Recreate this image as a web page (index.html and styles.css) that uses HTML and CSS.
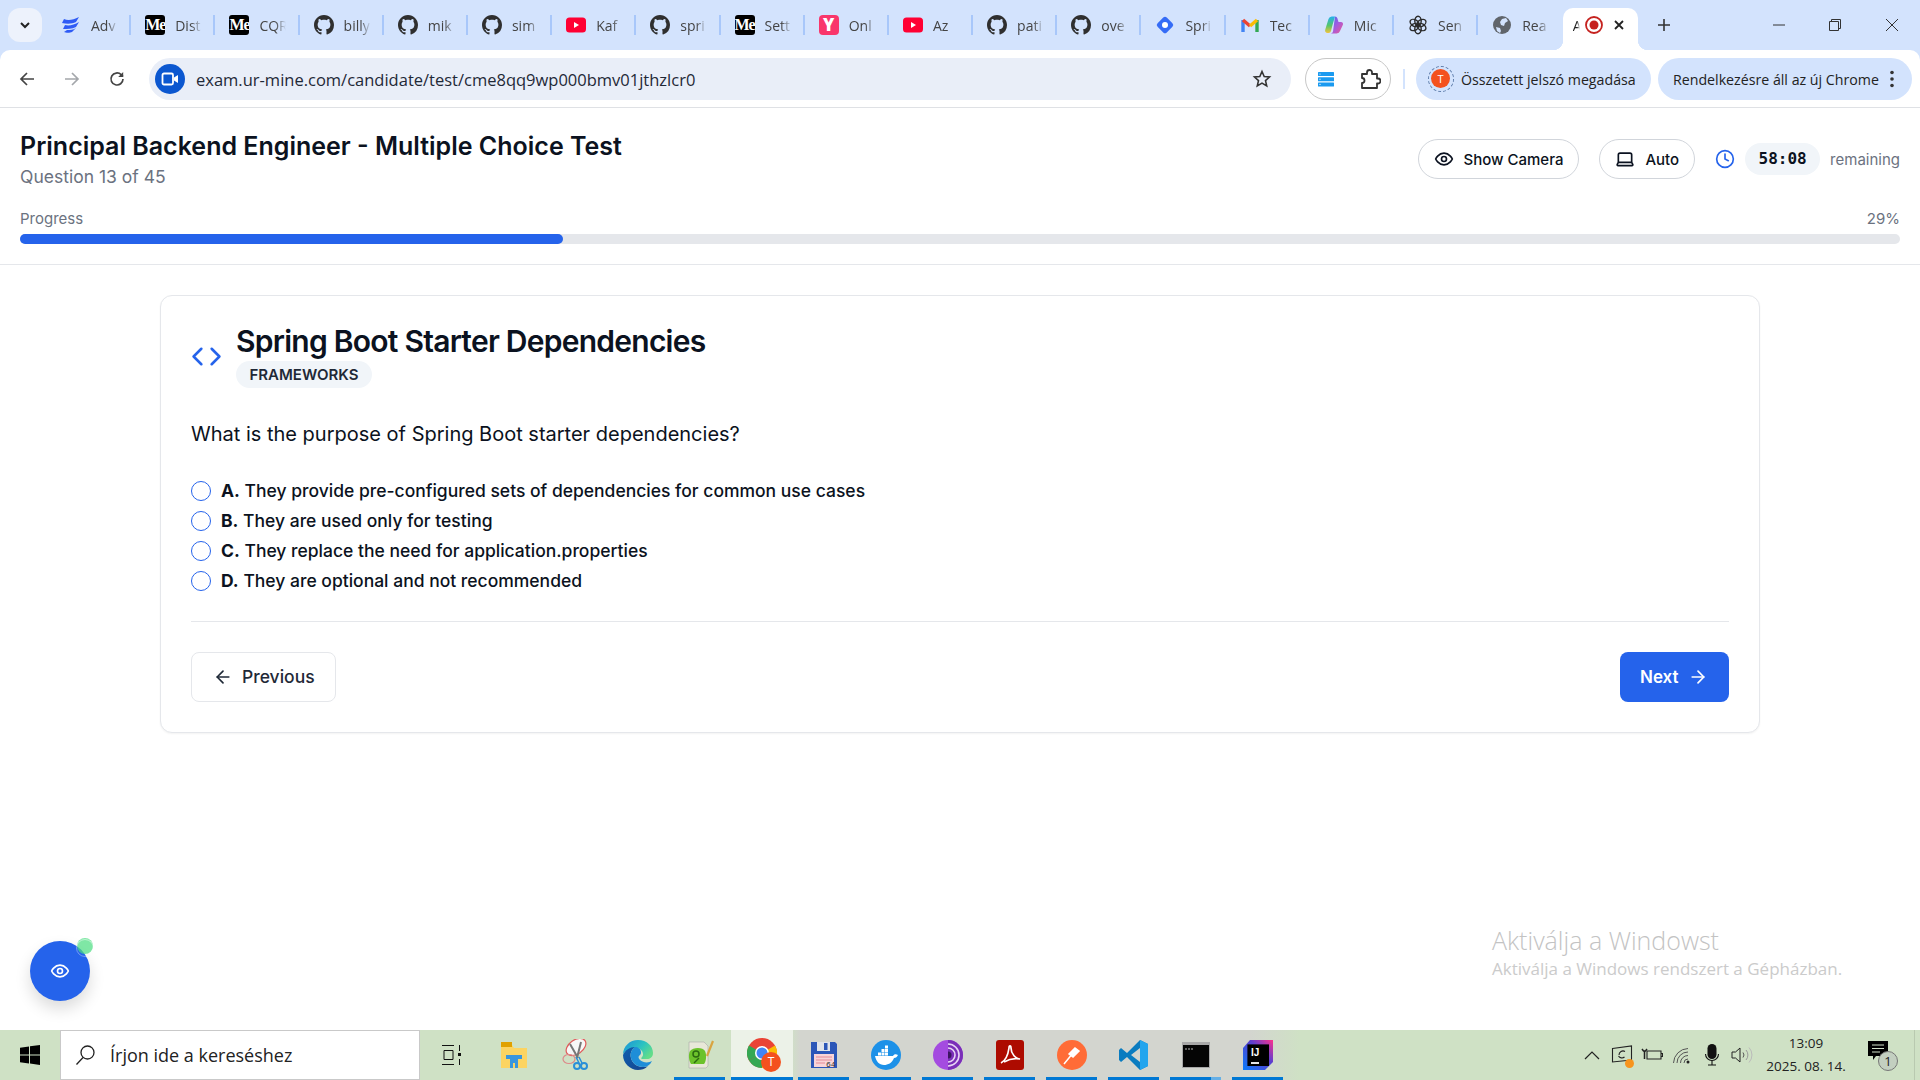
FILE: index.html
```html
<!DOCTYPE html>
<html lang="en">
<head>
  <meta charset="UTF-8" />
  <title>Principal Backend Engineer - Multiple Choice Test</title>
  <link rel="stylesheet" href="styles.css">
</head>
<body>
  <svg class="sprites" width="0" height="0">
    <symbol id="gh" viewBox="0 0 16 16"><path fill="#2f2f2f" d="M8 0C3.58 0 0 3.58 0 8c0 3.54 2.29 6.53 5.47 7.59.4.07.55-.17.55-.38 0-.19-.01-.82-.01-1.49-2.01.37-2.53-.49-2.69-.94-.09-.23-.48-.94-.82-1.13-.28-.15-.68-.52-.01-.53.63-.01 1.08.58 1.23.82.72 1.21 1.87.87 2.33.66.07-.52.28-.87.51-1.07-1.78-.2-3.64-.89-3.64-3.95 0-.87.31-1.59.82-2.15-.08-.2-.36-1.02.08-2.12 0 0 .67-.21 2.2.82.64-.18 1.32-.27 2-.27.68 0 1.36.09 2 .27 1.53-1.04 2.2-.82 2.2-.82.44 1.1.16 1.92.08 2.12.51.56.82 1.27.82 2.15 0 3.07-1.87 3.75-3.65 3.95.29.25.54.73.54 1.48 0 1.07-.01 1.93-.01 2.2 0 .21.15.46.55.38A8.013 8.013 0 0016 8c0-4.42-3.58-8-8-8z"/></symbol>
    <symbol id="yt" viewBox="0 0 20 20"><rect y="2.500" width="20" height="15" rx="3.500" fill="#ff0033"/><path fill="#fff" d="M8 7l5 3-5 3z"/></symbol>
  </svg>

  <!-- Browser tabs -->
  <div class="tabstrip">
    <button class="tab-search"><svg width="14" height="14" viewBox="0 0 14 14"><path d="M3 5l4 4 4-4" fill="none" stroke="#222" stroke-width="2"/></svg></button>
    <div class="tab"><svg class="tab-icon" viewBox="0 0 20 20"><path fill="#2f5bf5" d="M3 4c4 2 9 1 15-2l-3 5c-4 2-9 2-14 1zM4 10c4 1 9 0 14-3l-3 5c-4 2-9 2-13 2zM6 15c3 0 6 0 9-2l-4 4c-2 1-6 1-8 0z"/></svg><span class="tab-text">Adv</span></div>
    <div class="tab"><span class="medium">Me</span><span class="tab-text">Dist</span></div>
    <div class="tab"><span class="medium">Me</span><span class="tab-text">CQR</span></div>
    <div class="tab"><svg class="tab-icon"><use href="#gh"/></svg><span class="tab-text">billy</span></div>
    <div class="tab"><svg class="tab-icon"><use href="#gh"/></svg><span class="tab-text">mik</span></div>
    <div class="tab"><svg class="tab-icon"><use href="#gh"/></svg><span class="tab-text">sim</span></div>
    <div class="tab"><svg class="tab-icon"><use href="#yt"/></svg><span class="tab-text">Kaf</span></div>
    <div class="tab"><svg class="tab-icon"><use href="#gh"/></svg><span class="tab-text">spri</span></div>
    <div class="tab"><span class="medium">Me</span><span class="tab-text">Sett</span></div>
    <div class="tab"><span class="y-logo">Y</span><span class="tab-text">Onl</span></div>
    <div class="tab"><svg class="tab-icon"><use href="#yt"/></svg><span class="tab-text">Az</span></div>
    <div class="tab"><svg class="tab-icon"><use href="#gh"/></svg><span class="tab-text">pati</span></div>
    <div class="tab"><svg class="tab-icon"><use href="#gh"/></svg><span class="tab-text">ove</span></div>
    <div class="tab"><svg class="tab-icon" viewBox="0 0 20 20"><rect x="3.500" y="3.500" width="13" height="13" rx="2.500" transform="rotate(45 10 10)" fill="#356cf6"/><circle cx="10" cy="10" r="3" fill="#fff"/></svg><span class="tab-text">Spri</span></div>
    <div class="tab"><svg class="tab-icon" viewBox="0 0 20 20"><path d="M3 17V5" stroke="#4285f4" stroke-width="3.400" fill="none"/><path d="M17 17V5" stroke="#34a853" stroke-width="3.400" fill="none"/><path d="M3 5l7 6" stroke="#ea4335" stroke-width="3.400" fill="none"/><path d="M10 11l7-6" stroke="#fbbc04" stroke-width="3.400" fill="none"/></svg><span class="tab-text">Tec</span></div>
    <div class="tab"><svg class="tab-icon" viewBox="0 0 20 20"><defs><linearGradient id="cop1" x1="0" y1="0" x2="0" y2="1"><stop offset="0" stop-color="#23b0ef"/><stop offset=".55" stop-color="#56c66a"/><stop offset="1" stop-color="#f3c33c"/></linearGradient><linearGradient id="cop2" x1="0" y1="0" x2="1" y2="1"><stop offset="0" stop-color="#3f6fe8"/><stop offset=".5" stop-color="#a35be0"/><stop offset="1" stop-color="#ef5a8c"/></linearGradient></defs><path fill="url(#cop1)" d="M8 1.500h3L8.500 10 7 16a2.500 2.500 0 0 1-2.400 2H3.500a2.500 2.500 0 0 1-2.300-3.300L4.500 4a3.500 3.500 0 0 1 3.500-2.500z"/><path fill="url(#cop2)" d="M11 1.500a2.500 2.500 0 0 1 2.400 1.800L14.500 7H17a2 2 0 0 1 1.900 2.700L16 16a3.500 3.500 0 0 1-3.300 2.500H6.500A2.500 2.500 0 0 0 9 16.500z"/></svg><span class="tab-text">Mic</span></div>
    <div class="tab"><svg class="tab-icon" viewBox="0 0 20 20" fill="none" stroke="#2b2b2b" stroke-width="1.400"><ellipse cx="10" cy="6" rx="3.200" ry="4.800"/><ellipse cx="10" cy="6" rx="3.200" ry="4.800" transform="rotate(60 10 10)"/><ellipse cx="10" cy="6" rx="3.200" ry="4.800" transform="rotate(120 10 10)"/><ellipse cx="10" cy="6" rx="3.200" ry="4.800" transform="rotate(180 10 10)"/><ellipse cx="10" cy="6" rx="3.200" ry="4.800" transform="rotate(240 10 10)"/><ellipse cx="10" cy="6" rx="3.200" ry="4.800" transform="rotate(300 10 10)"/></svg><span class="tab-text">Sen</span></div>
    <div class="tab"><svg class="tab-icon" viewBox="0 0 20 20"><circle cx="10" cy="10" r="9" fill="#60656b"/><path fill="#d3e3fd" d="M10 4l4-1 2 3-3 2-1 3-3-1-1-3zM4 12l4 1 1 3-1 2-3-2z"/></svg><span class="tab-text">Rea</span></div>

    <div class="tab-active">
      <span class="tab-active-text">A</span>
      <svg width="20" height="20" viewBox="0 0 20 20"><circle cx="10" cy="10" r="8" fill="none" stroke="#c5221f" stroke-width="1.800"/><circle cx="10" cy="10" r="4.500" fill="#c5221f"/></svg>
      <svg class="tab-close" width="12" height="12" viewBox="0 0 12 12"><path d="M2 2l8 8M10 2l-8 8" stroke="#222" stroke-width="1.800"/></svg>
    </div>
    <svg class="new-tab" width="16" height="16" viewBox="0 0 16 16"><path d="M8 2v12M2 8h12" stroke="#333" stroke-width="1.600"/></svg>

    <div class="window-btns">
      <span class="window-btn"><svg width="14" height="14" viewBox="0 0 14 14"><path d="M1 7h12" stroke="#333"/></svg></span>
      <span class="window-btn"><svg width="14" height="14" viewBox="0 0 14 14" fill="none" stroke="#333"><path d="M1.500 3.500h9v9h-9zM3.500 3.500v-2h9v9h-2"/></svg></span>
      <span class="window-btn"><svg width="14" height="14" viewBox="0 0 14 14"><path d="M1 1l12 12M13 1L1 13" stroke="#333"/></svg></span>
    </div>
  </div>

  <!-- Browser toolbar -->
  <div class="toolbar-wrap">
    <div class="toolbar">
      <span class="nav-btn"><svg width="18" height="18" viewBox="0 0 18 18" fill="none" stroke="#444" stroke-width="1.700"><path d="M16 9H3M9 3L3 9l6 6"/></svg></span>
      <span class="nav-btn"><svg width="18" height="18" viewBox="0 0 18 18" fill="none" stroke="#a4a7ab" stroke-width="1.700"><path d="M2 9h13M9 3l6 6-6 6"/></svg></span>
      <span class="nav-btn"><svg width="18" height="18" viewBox="0 0 18 18" fill="none" stroke="#444" stroke-width="1.700"><path d="M15 9a6 6 0 1 1-1.800-4.300L15 6.500"/><path d="M15.200 2v5h-5" stroke="none" fill="#444"/></svg></span>

      <div class="omnibox">
        <span class="cam-chip"><svg width="18" height="18" viewBox="0 0 18 18"><rect x="1.500" y="3.500" width="10.500" height="11" rx="1.500" fill="none" stroke="#fff" stroke-width="1.800"/><path d="M13 7.500l4-2.500v8l-4-2.500z" fill="#fff"/></svg></span>
        <span class="url">exam.ur-mine.com/candidate/test/cme8qq9wp000bmv01jthzlcr0</span>
        <svg class="star" width="20" height="20" viewBox="0 0 20 20"><path d="M10 2.500l2.200 5 5.300.5-4 3.600 1.200 5.300L10 14.100l-4.700 2.800 1.200-5.300-4-3.600 5.300-.5z" fill="none" stroke="#333" stroke-width="1.600"/></svg>
      </div>

      <div class="ext-pill">
        <svg width="20" height="20" viewBox="0 0 20 20"><rect x="2" y="3" width="16" height="4" rx=".5" fill="#1a9af0"/><rect x="2" y="8.200" width="16" height="4" rx=".5" fill="#1a9af0"/><rect x="2" y="13.400" width="16" height="4" rx=".5" fill="#1a9af0"/><circle cx="4" cy="5" r=".6" fill="#fff"/><circle cx="4" cy="10.200" r=".6" fill="#fff"/><circle cx="4" cy="15.400" r=".6" fill="#fff"/></svg>
        <svg width="22" height="22" viewBox="0 0 22 22"><path d="M3 6h5V4.500a2.500 2.500 0 0 1 5 0V6h5v4.500h1a2.500 2.500 0 0 1 0 5h-1V20H3v-5a2.500 2.500 0 0 0 0-5z" fill="none" stroke="#333" stroke-width="1.800" stroke-linejoin="round"/></svg>
      </div>
      <span class="toolbar-sep"></span>
      <div class="chip chip-pass">
        <span class="avatar-ring"><span class="avatar">T</span></span>
        Összetett jelszó megadása
      </div>
      <div class="chip chip-update">
        Rendelkezésre áll az új Chrome
        <svg width="6" height="20" viewBox="0 0 6 20"><circle cx="3" cy="3.500" r="1.800" fill="#333"/><circle cx="3" cy="10" r="1.800" fill="#333"/><circle cx="3" cy="16.500" r="1.800" fill="#333"/></svg>
      </div>
    </div>
  </div>

  <!-- Page -->
  <main class="page">
    <header class="test-header">
      <div class="header-row">
        <div>
          <h1>Principal Backend Engineer - Multiple Choice Test</h1>
          <p class="question-count">Question 13 of 45</p>
        </div>
        <div class="header-actions">
          <button class="pill-btn">
            <svg class="ico20" viewBox="0 0 24 24"><path d="M2 12s3-7 10-7 10 7 10 7-3 7-10 7-10-7-10-7Z"/><circle cx="12" cy="12" r="3"/></svg>
            Show Camera
          </button>
          <button class="pill-btn">
            <svg class="ico20" viewBox="0 0 24 24"><path d="M20 16V7a2 2 0 0 0-2-2H6a2 2 0 0 0-2 2v9m16 0H4m16 0 1.280 2.550a1 1 0 0 1-.9 1.450H3.620a1 1 0 0 1-.9-1.450L4 16"/></svg>
            Auto
          </button>
          <svg class="ico-clock" viewBox="0 0 24 24"><circle cx="12" cy="12" r="10"/><path d="M12 6v6l4 2"/></svg>
          <span class="timer">58:08</span>
          <span class="remaining">remaining</span>
        </div>
      </div>
      <div class="progress-labels"><span>Progress</span><span>29%</span></div>
      <div class="progress-track"><div class="progress-fill" style="width: 28.89%"></div></div>
    </header>

    <section class="card">
      <div class="card-head">
        <svg class="ico-code" viewBox="0 0 24 24"><path d="m16 18 6-6-6-6"/><path d="m8 6-6 6 6 6"/></svg>
        <div>
          <h2>Spring Boot Starter Dependencies</h2>
          <span class="badge">FRAMEWORKS</span>
        </div>
      </div>
      <p class="question">What is the purpose of Spring Boot starter dependencies?</p>
      <div class="options">
        <label class="option"><span class="radio"></span><span><b>A.</b> They provide pre-configured sets of dependencies for common use cases</span></label>
        <label class="option"><span class="radio"></span><span><b>B.</b> They are used only for testing</span></label>
        <label class="option"><span class="radio"></span><span><b>C.</b> They replace the need for application.properties</span></label>
        <label class="option"><span class="radio"></span><span><b>D.</b> They are optional and not recommended</span></label>
      </div>
      <div class="card-nav">
        <button class="nav-prev">
          <svg class="ico20" viewBox="0 0 24 24"><path d="m12 19-7-7 7-7"/><path d="M19 12H5"/></svg>
          Previous
        </button>
        <button class="nav-next">
          Next
          <svg class="ico20" viewBox="0 0 24 24"><path d="M5 12h14"/><path d="m12 5 7 7-7 7"/></svg>
        </button>
      </div>
    </section>

    <button class="fab">
      <svg class="ico-fab" viewBox="0 0 24 24"><path d="M2 12s3-7 10-7 10 7 10 7-3 7-10 7-10-7-10-7Z"/><circle cx="12" cy="12" r="3"/></svg>
      <span class="fab-dot"></span>
    </button>

    <div class="watermark">
      <div class="watermark-title">Aktiválja a Windowst</div>
      <div class="watermark-sub">Aktiválja a Windows rendszert a Gépházban.</div>
    </div>
  </main>

  <!-- Windows taskbar -->
  <footer class="taskbar">
    <span class="start"><svg width="22" height="22" viewBox="0 0 22 22"><path fill="#000" d="M1 3.800l9-1.300v8H1zM11 2.300L21 1v9.500H11zM1 11.500h9v8l-9-1.300zM11 11.500h10V21l-10-1.400z"/></svg></span>
    <div class="search-box">
      <svg width="22" height="22" viewBox="0 0 22 22" fill="none" stroke="#222" stroke-width="1.300"><circle cx="13.500" cy="8.500" r="6.500"/><path d="M9 13.500L2.500 20.500"/></svg>
      <span>Írjon ide a kereséshez</span>
    </div>
    <span class="task-view"><svg width="22" height="22" viewBox="0 0 22 22" fill="none" stroke="#111"><path d="M1 1.500h12M1 20.500h12M3 6.500h9v9H3zM18.500 1v6M18.500 15v6"/><rect x="17" y="9" width="3" height="3" fill="#111" stroke="none"/></svg></span>

    <span class="app"><svg width="28" height="28" viewBox="0 0 28 28"><path d="M1 4h11l2 3h13v20H1z" fill="#fcd462"/><path d="M1 1h11v5H1z" fill="#e0a100"/><path d="M10 17h8v10h-3v-5h-2v5h-3z" fill="#3a96dd"/><rect x="6" y="14" width="16" height="4" fill="#3a96dd"/></svg></span>
    <span class="app"><svg width="28" height="32" viewBox="0 0 28 32"><ellipse cx="14" cy="8" rx="11" ry="7" fill="#f7f7f7" stroke="#e05a5a" stroke-width="1.200" transform="rotate(-35 14 8)"/><path d="M8 5l8 14M19 3l-4 16" stroke="#777" stroke-width="2"/><ellipse cx="7" cy="20" rx="6" ry="4.500" fill="none" stroke="#dd8a8a" stroke-width="1.200"/><path d="M14 18l3 6M17 18l3 6" stroke="#2a8fd8" stroke-width="1.500"/><circle cx="15" cy="27" r="3" fill="none" stroke="#2a8fd8" stroke-width="2"/><circle cx="22" cy="27" r="3" fill="none" stroke="#2a8fd8" stroke-width="2"/></svg></span>
    <span class="app"><svg width="32" height="32" viewBox="0 0 32 32"><defs><linearGradient id="edge1" x1="0" y1="0" x2="1" y2=".6"><stop offset="0" stop-color="#1a8fdc"/><stop offset=".6" stop-color="#2cc3c0"/><stop offset="1" stop-color="#62dc8a"/></linearGradient><linearGradient id="edge2" x1="0" y1="0" x2="1" y2="1"><stop offset="0" stop-color="#0d5fb0"/><stop offset="1" stop-color="#17448c"/></linearGradient></defs><path d="M1 16C1 7 8 1 16 1c9 0 15 6 15 13 0 4-3 6-6 6h-5c-1 0-1-1 0-2 1-1 1-2 1-3 0-3-3-6-7-6-6 0-13 4-13 7z" fill="url(#edge1)"/><path d="M1 16c2-5 7-8 12-8-4 3-5 7-4 11 1 5 6 9 12 9 2 0 3 0 5-1-3 3-7 4-10 4C8 31 1 24 1 16z" fill="url(#edge2)"/><path d="M13 8c-4 3-5 7-4 11 1 5 6 9 12 9 4 0 7-2 9-6-3 2-9 2-12-1-2-2-2-4 0-5 1-1 1-2 1-3 0-3-3-5-6-5z" fill="#1f8ed8"/></svg></span>
    <span class="app app-on"><svg width="28" height="32" viewBox="0 0 28 32"><path d="M3 3h15l4 4v20l-2 2H3z" fill="#e8e8d8" stroke="#aaa" stroke-width=".6"/><path d="M4 12c3-4 13-4 15 0s1 11-1 13H5c-2-3-3-9-1-13z" fill="#6cc22b"/><circle cx="10" cy="15" r="3" fill="none" stroke="#2c6a10" stroke-width="1.500"/><path d="M13 19l-5 5" stroke="#2c6a10" stroke-width="1.500"/><path d="M21 17l6-15" stroke="#d9a441" stroke-width="2.200"/></svg></span>
    <span class="app app-active"><span class="chrome-badge"><svg width="30" height="30" viewBox="0 0 30 30"><circle cx="15" cy="15" r="15" fill="#ea4335"/><path d="M15 15L2 22.500A15 15 0 0 1 2 7.500z" fill="#34a853"/><path d="M15 15l-13 7.500A15 15 0 0 0 15 30z" fill="#34a853"/><path d="M15 15l13-7.500A15 15 0 0 1 15 30z" fill="#fbbc04"/><circle cx="15" cy="15" r="7" fill="#fff"/><circle cx="15" cy="15" r="5.500" fill="#4285f4"/></svg><span class="chrome-t">T</span></span></span>
    <span class="app app-on"><svg width="28" height="28" viewBox="0 0 28 28"><path d="M1 1h24l2 2v24H1z" fill="#2b56b8"/><rect x="7" y="1" width="13" height="9" fill="#dfe3ea"/><rect x="14" y="2" width="3.500" height="7" fill="#2b56b8"/><rect x="4" y="13" width="20" height="13" fill="#f8d4d8"/><path d="M6 16h16M6 19h16M6 22h9" stroke="#e58a96"/><text x="16" y="25.500" class="floppy-text">64</text></svg></span>
    <span class="app app-on"><svg width="30" height="30" viewBox="0 0 30 30"><circle cx="15" cy="15" r="15" fill="#1d91e8"/><path d="M4 16h18c1-2 3-2 5-1-1 2-2 3-4 3-2 5-6 7-10 7-5 0-8-4-9-9z" fill="#fff"/><path fill="#fff" d="M7 12.500h3v3H7zM10.500 12.500h3v3h-3zM14 12.500h3v3h-3zM10.500 9h3v3h-3zM14 9h3v3h-3zM14 5.500h3v3h-3z"/></svg></span>
    <span class="app app-on"><svg width="30" height="30" viewBox="0 0 30 30"><circle cx="15" cy="15" r="15" fill="#a44be0"/><path d="M15 0a15 15 0 0 1 0 30z" fill="#7a2fb8"/><path d="M15 4a11 11 0 0 1 0 22M15 8a7 7 0 0 1 0 14" fill="none" stroke="#e8d4f5" stroke-width="1.600"/><path d="M15 11.500a3.500 3.500 0 0 1 0 7z" fill="#3b1560"/></svg></span>
    <span class="app app-on"><svg width="28" height="30" viewBox="0 0 28 30"><rect width="28" height="30" rx="3" fill="#ad0b00"/><path d="M5 23c4-2 7-8 8-15 0-3 2-3 2 0 0 6 5 11 9 11-5-1-11 0-16 3" fill="none" stroke="#fff" stroke-width="1.700"/></svg></span>
    <span class="app app-on"><svg width="30" height="30" viewBox="0 0 30 30"><circle cx="15" cy="15" r="15" fill="#ff6c37"/><path d="M7 24l9-11M12 14l6-6 4 3-6 6z" fill="#fff" stroke="#fff" stroke-width="1.500"/></svg></span>
    <span class="app app-on"><svg width="32" height="32" viewBox="0 0 32 32"><path d="M22 1l8 4v22l-8 4L9 18l-6 5-2-2v-10l2-2 6 5z" fill="#0a7cc0"/><path d="M22 1l8 4v22l-8 4z" fill="#24a5ee"/><path d="M22 9l-9 7 9 7z" fill="#d3d5cf"/></svg></span>
    <span class="app app-on app-split"><svg width="28" height="26" viewBox="0 0 28 26"><rect width="28" height="26" fill="#a8a8a8"/><rect x="1" y="3" width="26" height="22" fill="#050505"/><path d="M3 7h8" stroke="#bbb" stroke-dasharray="2 1"/></svg></span>
    <span class="app app-on"><svg width="30" height="30" viewBox="0 0 30 30"><defs><linearGradient id="ij1" x1="0" y1="1" x2="1" y2="0"><stop offset="0" stop-color="#087cfa"/><stop offset=".6" stop-color="#5a3fd0"/><stop offset="1" stop-color="#ff318c"/></linearGradient></defs><path d="M7 0h23v22l-8 8H0V8z" fill="url(#ij1)"/><rect x="6" y="6" width="24" height="24" fill="#000" transform="translate(-1 -1) scale(.9)"/><text x="8" y="16" class="ij-text">IJ</text><path d="M8 23h8" stroke="#fff" stroke-width="1.800"/></svg></span>

    <div class="tray">
      <span class="tray-item"><svg width="18" height="18" viewBox="0 0 18 18"><path d="M2 13l7-7 7 7" fill="none" stroke="#222" stroke-width="1.200"/></svg></span>
      <span class="tray-item tray-update"><svg width="22" height="20" viewBox="0 0 22 20" fill="none" stroke="#222" stroke-width="1.100"><path d="M1.500 3.500L20.500 1v14L1.500 17z"/><path d="M14 6.500a4 4 0 0 0-6 3.500M7.500 11a4 4 0 0 0 6 1"/></svg><i class="update-dot"></i></span>
      <span class="tray-item"><svg width="22" height="14" viewBox="0 0 22 14" fill="none" stroke="#222" stroke-width="1.100"><path d="M6 3h14v8H6zM20 5.500h1.500v3H20z"/><path d="M1 1l1.500 2h2L6 1M3.500 3v8" stroke-width="1.500"/></svg></span>
      <span class="tray-item"><svg width="20" height="18" viewBox="0 0 20 18" fill="none" stroke="#555" stroke-width="1"><path d="M1.500 17A15 15 0 0 1 16 2.500M5 17A11 11 0 0 1 16 6M8.500 17a7.500 7.500 0 0 1 7.500-7.500M12 17a4 4 0 0 1 4-4"/><circle cx="16" cy="16" r="1.500" fill="#222" stroke="none"/></svg></span>
      <span class="tray-item"><svg width="16" height="22" viewBox="0 0 16 22"><rect x="3.500" y="0" width="9" height="15" rx="4.500" fill="#111"/><path d="M1.500 10a6.500 6.500 0 0 0 13 0M8 16.500V21M4 21h8" fill="none" stroke="#111" stroke-width="1.100"/></svg></span>
      <span class="tray-item"><svg width="22" height="18" viewBox="0 0 22 18" fill="none" stroke="#222" stroke-width="1"><path d="M1 6h3.500L9 2v14l-4.500-4H1z"/><path d="M12 6.500a4 4 0 0 1 0 5" stroke="#555"/><path d="M15 4a7.500 7.500 0 0 1 0 10" stroke="#999"/><path d="M18 1.500a11 11 0 0 1 0 15" stroke="#bbb"/></svg></span>
      <div class="clock"><div>13:09</div><div>2025. 08. 14.</div></div>
      <span class="notif"><svg width="22" height="20" viewBox="0 0 22 20"><path fill="#000" d="M0 0h20v15H8l-3 4v-4H0z"/><path d="M4 4h12M4 7.500h12M4 11h8" stroke="#d3e3cb"/></svg><span class="notif-count">1</span></span>
      <span class="show-desktop"></span>
    </div>
  </footer>
</body>
</html>
```

FILE: styles.css
```css
* {
  box-sizing: border-box;
}
html, body {
  margin: 0;
  padding: 0;
}
body {
  width: 1920px;
  height: 1080px;
  overflow: hidden;
  display: flex;
  flex-direction: column;
  font-family: 'Inter', sans-serif;
  color: #0b1220;
  background-color: #fff;
}
button {
  font-family: inherit;
  cursor: pointer;
}
h1, h2, p {
  margin: 0;
}
.sprites {
  position: absolute;
}

/* browser tabs */
.tabstrip {
  height: 50px;
  flex: none;
  display: flex;
  align-items: center;
  background-color: #d3e3fd;
  font-family: 'Open Sans', sans-serif;
  font-size: 14px;
  color: #444;
}
.tab-search {
  width: 34px;
  height: 34px;
  margin: 0 5px 0 8px;
  padding: 0;
  border: none;
  border-radius: 12px;
  background-color: #edf2fc;
  display: flex;
  align-items: center;
  justify-content: center;
}
.tab {
  width: 84.200px;
  height: 20px;
  flex: none;
  padding-left: 14px;
  display: flex;
  align-items: center;
  gap: 10px;
  border-right: 2px solid #a8c7fa;
}
.tab:nth-of-type(18) {
  border-right-color: transparent;
}
.tab-icon {
  width: 20px;
  height: 20px;
  flex: none;
}
.tab-text {
  width: 27px;
  overflow: hidden;
  white-space: nowrap;
  -webkit-mask-image: linear-gradient(to right, #000 60%, transparent);
  mask-image: linear-gradient(to right, #000 60%, transparent);
}
.medium {
  width: 20px;
  height: 20px;
  flex: none;
  overflow: hidden;
  border-radius: 3px;
  background-color: #000;
  color: #fff;
  font: bold 16px/20px 'Liberation Serif', serif;
  letter-spacing: -1px;
}
.y-logo {
  width: 20px;
  height: 20px;
  flex: none;
  border-radius: 4px;
  background-color: #f9366b;
  color: #fff;
  font: 800 17px/20px 'Open Sans', sans-serif;
  text-align: center;
}
.tab-active {
  position: relative;
  width: 75px;
  height: 42px;
  flex: none;
  align-self: flex-end;
  margin-left: .4px;
  padding: 0 0 8px 10px;
  display: flex;
  align-items: center;
  border-radius: 10px 10px 0 0;
  background-color: #fff;
  color: #222;
}
.tab-active::before,
.tab-active::after {
  content: "";
  position: absolute;
  bottom: 0;
  width: 10px;
  height: 10px;
}
.tab-active::before {
  left: -10px;
  background: radial-gradient(circle at 0 0, transparent 10px, #fff 10.500px);
}
.tab-active::after {
  right: -10px;
  background: radial-gradient(circle at 100% 0, transparent 10px, #fff 10.500px);
}
.tab-active-text {
  width: 10px;
  margin-right: 1px;
  -webkit-mask-image: linear-gradient(to right, #000 40%, transparent 70%);
  mask-image: linear-gradient(to right, #000 40%, transparent 70%);
}
.tab-close {
  margin-left: 9px;
}
.new-tab {
  margin-left: 18px;
}
.window-btns {
  margin-left: auto;
  display: flex;
}
.window-btn {
  width: 56.600px;
  height: 50px;
  display: flex;
  align-items: center;
  justify-content: center;
}

/* browser toolbar */
.toolbar-wrap {
  flex: none;
  background-color: #d3e3fd;
}
.toolbar {
  height: 58px;
  padding: 1px 8px 0 9px;
  display: flex;
  align-items: center;
  border-bottom: 1px solid #dfe1e5;
  border-radius: 10px 10px 0 0;
  background-color: #fff;
  font-family: 'Open Sans', sans-serif;
}
.nav-btn {
  width: 36px;
  height: 36px;
  margin-right: 9px;
  display: flex;
  align-items: center;
  justify-content: center;
}
.omnibox {
  height: 42px;
  flex: 1;
  margin-left: 5px;
  padding: 0 19px 0 6px;
  display: flex;
  align-items: center;
  border-radius: 21px;
  background-color: #e9eef8;
  font-size: 16.500px;
  color: #1f2937;
}
.cam-chip {
  width: 30px;
  height: 30px;
  flex: none;
  border-radius: 50%;
  background-color: #0b57d0;
  display: flex;
  align-items: center;
  justify-content: center;
}
.url {
  margin-left: 11px;
  white-space: nowrap;
}
.star {
  margin-left: auto;
}
.ext-pill {
  width: 86px;
  height: 42px;
  margin-left: 14px;
  padding: 0 9px 0 10px;
  display: flex;
  align-items: center;
  justify-content: space-between;
  border: 1px solid #c7c7c7;
  border-radius: 21px;
}
.toolbar-sep {
  width: 2px;
  height: 20px;
  margin: 0 11px 0 12px;
  background-color: #d3e3fd;
}
.chip {
  height: 42px;
  display: flex;
  align-items: center;
  border-radius: 21px;
  background-color: #d3e3fd;
  font-size: 14.200px;
  color: #222;
  white-space: nowrap;
}
.chip-pass {
  width: 235px;
  padding-left: 12px;
  gap: 7px;
}
.chip-update {
  width: 254px;
  margin-left: 7px;
  padding: 0 17px 0 15px;
  justify-content: space-between;
}
.avatar-ring {
  width: 26px;
  height: 26px;
  flex: none;
  padding: 2px;
  border: 1.500px dashed #5b7aa8;
  border-radius: 50%;
}
.avatar {
  display: block;
  width: 19px;
  height: 19px;
  border-radius: 50%;
  background-color: #f4511e;
  color: #fff;
  font-size: 11px;
  line-height: 19px;
  text-align: center;
}

/* page */
.page {
  position: relative;
  flex: 1;
  background-color: #fff;
}
.test-header {
  padding: 22px 20px 20px;
  border-bottom: 1px solid #e5e7eb;
}
.header-row {
  display: flex;
  justify-content: space-between;
  align-items: center;
}
h1 {
  font-size: 25px;
  font-weight: 600;
  line-height: 32px;
  color: #0b1220;
}
.question-count {
  margin-top: 3px;
  font-size: 17.500px;
  line-height: 24px;
  color: #6b7280;
}
.header-actions {
  margin-top: -1px;
  display: flex;
  align-items: center;
}
.pill-btn {
  height: 40px;
  margin-right: 20px;
  padding: 0 15px;
  display: flex;
  align-items: center;
  gap: 10px;
  border: 1px solid #d1d5db;
  border-radius: 20px;
  background-color: #fff;
  color: #0b1220;
  font-size: 15px;
  font-weight: 500;
}
.ico20 {
  width: 20px;
  height: 20px;
  flex: none;
  fill: none;
  stroke: currentColor;
  stroke-width: 2;
  stroke-linecap: round;
  stroke-linejoin: round;
}
.ico-clock {
  width: 20px;
  height: 20px;
  fill: none;
  stroke: #2563eb;
  stroke-width: 2;
  stroke-linecap: round;
  stroke-linejoin: round;
}
.timer {
  width: 75px;
  height: 32px;
  margin: 0 10px;
  border-radius: 16px;
  background-color: #f1f5f9;
  font: bold 16px/32px 'DejaVu Sans Mono', monospace;
  text-align: center;
}
.remaining {
  font-size: 15px;
  color: #6b7280;
}
.progress-labels {
  margin-top: 20px;
  display: flex;
  justify-content: space-between;
  font-size: 15px;
  line-height: 20px;
  color: #6b7280;
}
.progress-track {
  height: 10px;
  margin-top: 5px;
  border-radius: 5px;
  background-color: #e5e7eb;
}
.progress-fill {
  height: 100%;
  border-radius: 5px;
  background-color: #2563eb;
}

/* question card */
.card {
  width: 1600px;
  margin: 30px auto 0;
  padding: 27px 30px 30px;
  border: 1px solid #e5e7eb;
  border-radius: 12px;
  background-color: #fff;
  box-shadow: 0 1px 2px rgba(0, 0, 0, 0.05);
}
.card-head {
  display: flex;
  align-items: center;
  gap: 14px;
}
.ico-code {
  width: 31px;
  height: 31px;
  margin-top: 2px;
  flex: none;
  fill: none;
  stroke: #2563eb;
  stroke-width: 2;
  stroke-linecap: round;
  stroke-linejoin: round;
}
h2 {
  font-size: 30px;
  font-weight: 600;
  line-height: 36px;
  letter-spacing: -.75px;
  color: #0b1220;
}
.badge {
  display: inline-block;
  height: 27px;
  margin-top: 2px;
  padding: 0 13.500px;
  border-radius: 14px;
  background-color: #f1f5f9;
  font-size: 15px;
  font-weight: 600;
  line-height: 27px;
  color: #1f2937;
}
.question {
  margin-top: 32px;
  font-size: 20px;
  line-height: 28px;
  color: #0b1220;
}
.options {
  margin-top: 28px;
}
.option {
  height: 30px;
  display: flex;
  align-items: center;
  gap: 10px;
  font-size: 17.500px;
  font-weight: 500;
  line-height: 28px;
  color: #0b1220;
}
.option b {
  font-weight: 700;
}
.radio {
  width: 20px;
  height: 20px;
  flex: none;
  border: 1.500px solid #2563eb;
  border-radius: 50%;
  background-color: #fff;
}
.card-nav {
  margin-top: 25px;
  padding-top: 30px;
  display: flex;
  justify-content: space-between;
  border-top: 1px solid #e5e7eb;
}
.nav-prev,
.nav-next {
  height: 50px;
  display: flex;
  align-items: center;
  border-radius: 8px;
  font-size: 17.500px;
  font-weight: 500;
  line-height: 24px;
}
.nav-prev {
  width: 145px;
  padding: 0 0 1px 21px;
  gap: 9px;
  border: 1px solid #e5e7eb;
  background-color: #fff;
  color: #1f2937;
}
.nav-next {
  width: 109px;
  padding: 0 0 1px 20px;
  gap: 9px;
  border: none;
  background-color: #2563eb;
  color: #fff;
  font-weight: 600;
  font-size: 17px;
}

/* floating camera button */
.fab {
  position: absolute;
  left: 30px;
  bottom: 29px;
  width: 60px;
  height: 60px;
  padding: 0;
  border: none;
  border-radius: 50%;
  display: flex;
  align-items: center;
  justify-content: center;
  background-color: #2563eb;
  box-shadow: 0 8px 16px rgba(0, 0, 0, 0.14);
}
.ico-fab {
  width: 20px;
  height: 20px;
  fill: none;
  stroke: #fff;
  stroke-width: 2;
  stroke-linejoin: round;
}
.fab-dot {
  position: absolute;
  top: -3px;
  right: -3px;
  width: 16px;
  height: 16px;
  border-radius: 50%;
  background-color: #4ade80;
  opacity: .7;
}
.fab-dot::before {
  content: "";
  position: absolute;
  left: -1px;
  top: 1px;
  width: 16px;
  height: 16px;
  border: 1px solid rgba(255, 255, 255, 0.5);
  border-radius: 50%;
}

/* windows activation text */
.watermark {
  position: absolute;
  left: 1492px;
  top: 816px;
  font-family: 'Open Sans', sans-serif;
  color: #c3c3c3;
  white-space: nowrap;
}
.watermark-title {
  font-size: 25px;
  font-weight: 300;
  line-height: 32px;
}
.watermark-sub {
  font-size: 17px;
  line-height: 26px;
  color: #cbcbcb;
}

/* windows taskbar */
.taskbar {
  height: 50px;
  flex: none;
  display: flex;
  align-items: center;
  background: linear-gradient(to right, #cfe1c5 0, #cfe1c5 790px, #d3d5cf 800px, #d3d5cf 1250px, #cfe1c5 1300px);
}
.start {
  width: 60px;
  display: flex;
  justify-content: center;
}
.search-box {
  width: 360px;
  height: 50px;
  padding: 0 0 0 13px;
  display: flex;
  align-items: center;
  gap: 14px;
  border: 1px solid #c9c9c9;
  background-color: #fff;
  font-family: 'Open Sans', sans-serif;
  font-size: 18px;
  color: #222;
}
.task-view {
  width: 63px;
  display: flex;
  justify-content: center;
}
.app {
  position: relative;
  width: 62px;
  height: 50px;
  flex: none;
  display: flex;
  align-items: center;
  justify-content: center;
}
.app-on::after,
.app-active::after {
  content: "";
  position: absolute;
  left: 5px;
  right: 6px;
  bottom: 0;
  height: 3px;
  background-color: #0078d4;
}
.app-active {
  background-color: #ecf2e8;
}
.app-active::after {
  left: 0;
  right: 0;
}
.app-split::after {
  background: linear-gradient(to right, #0078d4 80%, #66b0e6 80%);
}
.chrome-badge {
  position: relative;
  display: block;
  width: 30px;
  height: 30px;
  margin-top: -4px;
}
.chrome-t {
  position: absolute;
  right: -4px;
  bottom: -4px;
  width: 20px;
  height: 20px;
  border-radius: 50%;
  background-color: #f4511e;
  color: #fff;
  font: 12px/20px 'Open Sans', sans-serif;
  text-align: center;
}
.floppy-text {
  font: 8px 'Liberation Mono', monospace;
  fill: #333;
}
.ij-text {
  font: bold 10px 'Liberation Sans', sans-serif;
  fill: #fff;
}
.tray {
  margin-left: auto;
  display: flex;
  align-items: center;
  font-family: 'Open Sans', sans-serif;
  color: #222;
}
.tray-item {
  position: relative;
  width: 30px;
  display: flex;
  justify-content: center;
}
.update-dot {
  position: absolute;
  right: 3px;
  bottom: -3px;
  width: 9px;
  height: 9px;
  border-radius: 50%;
  background-color: #f7941d;
}
.clock {
  width: 98px;
  font-size: 13.500px;
  line-height: 23px;
  text-align: center;
}
.notif {
  position: relative;
  width: 48px;
  height: 36px;
  display: flex;
  align-items: flex-start;
  justify-content: center;
  padding-top: 4px;
}
.notif-count {
  position: absolute;
  left: 23px;
  top: 14px;
  width: 20px;
  height: 20px;
  border: 1px solid #777;
  border-radius: 50%;
  background-color: #c3cfc0;
  font-size: 13px;
  line-height: 18px;
  text-align: center;
}
.show-desktop {
  width: 1px;
  height: 50px;
  margin: 0 5px 0 11px;
  background-color: #b9c9b0;
}
```
